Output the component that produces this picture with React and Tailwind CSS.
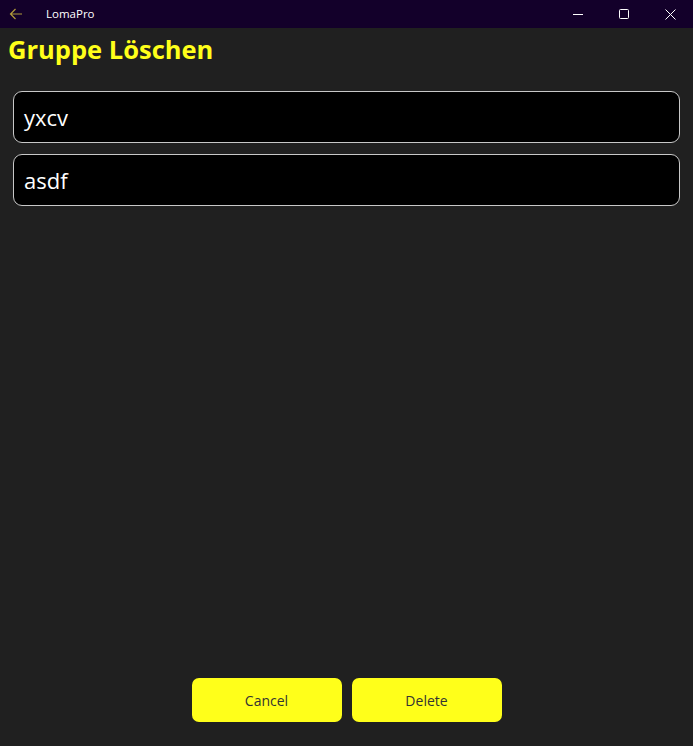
import React from "react";

const ITEMS = ["yxcv", "asdf"];

function TitleBar() {
  return (
    <div className="flex items-center h-7 bg-[#13002a] text-white">
      <div className="w-[31px] flex justify-center">
        <svg width="14" height="12" viewBox="0 0 14 12" fill="none" stroke="#b09a3a" strokeWidth="1.2">
          <path d="M13 6H1.5M6.5 1L1.5 6l5 5" />
        </svg>
      </div>
      <span className="ml-[15px] text-[11.5px]">LomaPro</span>
      <div className="ml-auto flex items-center h-full">
        <div className="w-[46px] flex justify-center">
          <svg width="10" height="10" viewBox="0 0 10 10" stroke="white" strokeWidth="1">
            <path d="M0 5.5h10" />
          </svg>
        </div>
        <div className="w-[46px] flex justify-center">
          <svg width="10" height="10" viewBox="0 0 10 10" fill="none" stroke="white" strokeWidth="1">
            <rect x="0.5" y="0.5" width="9" height="9" rx="1" />
          </svg>
        </div>
        <div className="w-[46px] flex justify-center">
          <svg width="11" height="11" viewBox="0 0 11 11" stroke="white" strokeWidth="1">
            <path d="M0.5 0.5l10 10M10.5 0.5l-10 10" />
          </svg>
        </div>
      </div>
    </div>
  );
}

export default function App() {
  return (
    <div className="w-[693px] h-[746px] flex flex-col bg-[#202020] font-['Open_Sans',sans-serif] overflow-hidden">
      <TitleBar />
      <h1 className="px-[8px] pt-[3px] text-[25.5px] leading-[37px] font-bold text-[#ffff1a]">Gruppe Löschen</h1>

      <div className="px-[13px] pt-[23px] flex flex-col gap-[11px]">
        {ITEMS.map((item) => (
          <div
            key={item}
            className="h-[52px] flex items-center px-[10px] bg-black border border-[#c8c8c8] rounded-[9px] text-white text-[22px]"
          >
            {item}
          </div>
        ))}
      </div>

      <div className="mt-auto mb-[24px] flex justify-center gap-[10px]">
        <button className="w-[150px] h-[44px] pt-[2px] rounded-[7px] bg-[#ffff1a] text-[#333] text-sm">Cancel</button>
        <button className="w-[150px] h-[44px] pt-[2px] rounded-[7px] bg-[#ffff1a] text-[#333] text-sm">Delete</button>
      </div>
    </div>
  );
}
